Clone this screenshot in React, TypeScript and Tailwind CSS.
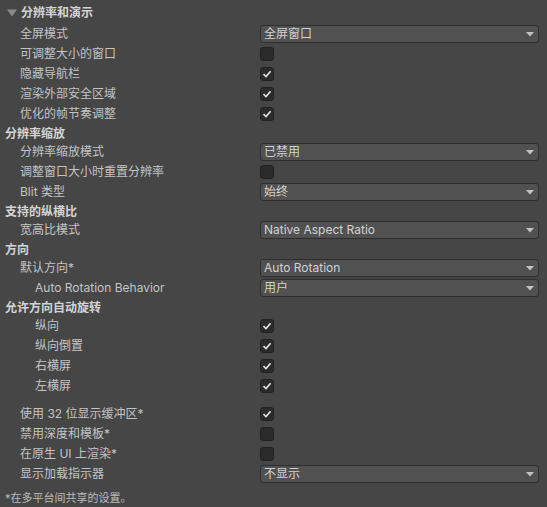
type Row =
  | { kind: 'foldout'; label: string }
  | { kind: 'header'; label: string }
  | { kind: 'dropdown'; label: string; value: string; indent: 1 | 2 }
  | { kind: 'check'; label: string; checked: boolean; indent: 1 | 2 }
  | { kind: 'gap' };

const rows: Row[] = [
  { kind: 'foldout', label: '分辨率和演示' },
  { kind: 'dropdown', label: '全屏模式', value: '全屏窗口', indent: 1 },
  { kind: 'check', label: '可调整大小的窗口', checked: false, indent: 1 },
  { kind: 'check', label: '隐藏导航栏', checked: true, indent: 1 },
  { kind: 'check', label: '渲染外部安全区域', checked: true, indent: 1 },
  { kind: 'check', label: '优化的帧节奏调整', checked: true, indent: 1 },
  { kind: 'header', label: '分辨率缩放' },
  { kind: 'dropdown', label: '分辨率缩放模式', value: '已禁用', indent: 1 },
  { kind: 'check', label: '调整窗口大小时重置分辨率', checked: false, indent: 1 },
  { kind: 'dropdown', label: 'Blit 类型', value: '始终', indent: 1 },
  { kind: 'header', label: '支持的纵横比' },
  { kind: 'dropdown', label: '宽高比模式', value: 'Native Aspect Ratio', indent: 1 },
  { kind: 'header', label: '方向' },
  { kind: 'dropdown', label: '默认方向*', value: 'Auto Rotation', indent: 1 },
  { kind: 'dropdown', label: 'Auto Rotation Behavior', value: '用户', indent: 2 },
  { kind: 'header', label: '允许方向自动旋转' },
  { kind: 'check', label: '纵向', checked: true, indent: 2 },
  { kind: 'check', label: '纵向倒置', checked: true, indent: 2 },
  { kind: 'check', label: '右横屏', checked: true, indent: 2 },
  { kind: 'check', label: '左横屏', checked: true, indent: 2 },
  { kind: 'gap' },
  { kind: 'check', label: '使用 32 位显示缓冲区*', checked: true, indent: 1 },
  { kind: 'check', label: '禁用深度和模板*', checked: false, indent: 1 },
  { kind: 'check', label: '在原生 UI 上渲染*', checked: false, indent: 1 },
  { kind: 'dropdown', label: '显示加载指示器', value: '不显示', indent: 1 },
];

function Checkbox({ checked }: { checked: boolean }) {
  return (
    <div className="w-[14px] h-[14px] rounded-[3px] bg-[#2b2b2b] border border-[#212121] flex items-center justify-center">
      {checked && (
        <svg width="10" height="10" viewBox="0 0 10 10">
          <path d="M1.5 5.2 L4 7.6 L8.6 2.2" fill="none" stroke="#e4e4e4" strokeWidth="1.6" />
        </svg>
      )}
    </div>
  );
}

function Dropdown({ value }: { value: string }) {
  return (
    <div className="h-[18px] w-full rounded-[3px] bg-[#515151] border border-[#2e2e2e] flex items-center justify-between pl-[3px] pr-[4px]">
      <span className="text-[#d2d2d2] leading-none">{value}</span>
      <svg width="8" height="5" viewBox="0 0 8 5">
        <path d="M0 0 H8 L4 4.5 Z" fill="#c4c4c4" />
      </svg>
    </div>
  );
}

function Label({ text, indent }: { text: string; indent: 1 | 2 }) {
  return (
    <div className={`w-[260px] shrink-0 text-[#c4c4c4] ${indent === 1 ? 'pl-[20px]' : 'pl-[35px]'}`}>
      {text}
    </div>
  );
}

export default function App() {
  return (
    <div
      className="w-[547px] h-[507px] bg-[#464646] text-[12px] pt-[3px] overflow-hidden"
      style={{ fontFamily: 'Inter, "Noto Sans CJK SC", sans-serif' }}
    >
      {rows.map((r, i) => {
        if (r.kind === 'foldout') {
          return (
            <div key={i} className="h-[20px] mb-[2px] flex items-center pl-[7px] gap-[4px]">
              <svg width="10" height="8" viewBox="0 0 10 8">
                <path d="M0 0.5 H10 L5 7.5 Z" fill="#8a8a8a" />
              </svg>
              <span className="font-bold text-[#d4d4d4]">{r.label}</span>
            </div>
          );
        }
        if (r.kind === 'header') {
          return (
            <div key={i} className="h-[18px] flex items-center pl-[5px] font-bold text-[#d4d4d4]">
              {r.label}
            </div>
          );
        }
        if (r.kind === 'gap') return <div key={i} className="h-[8px]" />;
        return (
          <div key={i} className="h-[18px] mb-[2px] flex items-center pr-[8px]">
            <Label text={r.label} indent={r.indent} />
            {r.kind === 'dropdown' ? <Dropdown value={r.value} /> : <Checkbox checked={r.checked} />}
          </div>
        );
      })}
      <div className="mt-[7px] pl-[5px] text-[11px] text-[#bdbdbd]">*在多平台间共享的设置。</div>
    </div>
  );
}
